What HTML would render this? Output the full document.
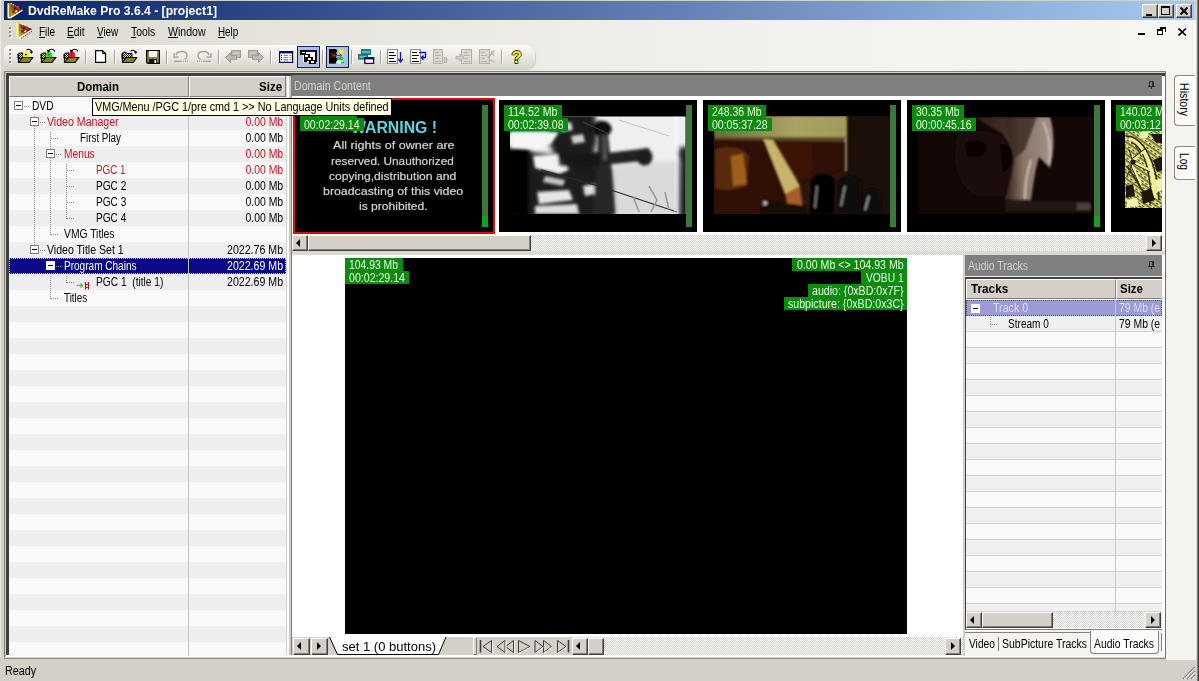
<!DOCTYPE html><html><head><meta charset="utf-8"><title>DvdReMake Pro 3.6.4 - [project1]</title><style>
*{box-sizing:border-box;margin:0;padding:0}
html,body{width:1199px;height:681px;overflow:hidden;background:#d4d0c8;font-family:"Liberation Sans",sans-serif;font-size:12px;color:#000}
.a{position:absolute}
.t{position:absolute;white-space:nowrap;line-height:16px}
#title{left:4px;top:1px;width:1190px;height:19px;background:linear-gradient(to right,#0a246a,#a6caf0)}
.cb{position:absolute;top:3px;height:14px;width:16px;background:#d4d0c8;border:1px solid;border-color:#fff #404040 #404040 #fff;box-shadow:inset -1px -1px 0 #808080}
#menubar{left:0;top:20px;width:1199px;height:52px;background:linear-gradient(to right,#dbd8cf 0,#e4e2da 20%,#eeede8 48%,#f4f3ef 75%,#f6f5f2 100%)}
#toolbar{left:4px;top:45px;width:531px;height:24px;border-radius:5px 9px 9px 0;background:linear-gradient(to bottom,#fbfaf8 0%,#ebe9e2 50%,#d6d3c9 100%);box-shadow:1px 1px 1px #cfccc3}
.sep{position:absolute;top:50px;width:2px;height:14px;border-left:1px solid #a6a399;border-right:1px solid #fff}
.grip{position:absolute;width:3px;background-image:radial-gradient(circle at 1px 1px,#8e8b82 1px,transparent 1.2px),radial-gradient(circle at 2px 2px,#fff 1px,transparent 1.2px);background-size:3px 4px}
.row{position:absolute;left:9px;width:277px;height:16px}
.row.o{background:#f9f9f9}.row.e{background:#eeeeee}
.box{position:absolute;width:9px;height:9px;border:1px solid #808080;background:#fff}
.box:after{content:"";position:absolute;left:1px;top:3px;width:5px;height:1px;background:#000}
.gl{position:absolute;background:#0e8a10;height:13px}
.hdr{position:absolute;background:#d4d0c8;border:1px solid;border-color:#fff #808080 #808080 #fff}
.dots{background-image:conic-gradient(#fff 25%,#d4d0c8 0 50%,#fff 0 75%,#d4d0c8 0);background-size:2px 2px}
.sbtn{position:absolute;width:16px;height:16px;background:#d4d0c8;border:1px solid;border-color:#fff #404040 #404040 #fff;box-shadow:inset -1px -1px 0 #808080,inset 1px 1px 0 #d4d0c8}
.arL:after,.arR:after{content:"";position:absolute;top:3px;border:4px solid transparent}
.arL:after{left:3px;border-right-color:#000;border-left-width:0}
.arR:after{left:5px;border-left-color:#000;border-right-width:0}
.vd{position:absolute;width:1px;background-image:linear-gradient(#909090 50%,transparent 50%);background-size:1px 2px}
.hd{position:absolute;height:1px;background-image:linear-gradient(to right,#909090 50%,transparent 50%);background-size:2px 1px}
</style></head><body>
<div id="title" class="a">
<div class="cb" style="left:1138px"><i class="a" style="left:3px;top:9px;width:6px;height:2px;background:#000"></i></div>
<div class="cb" style="left:1154px"><i class="a" style="left:2px;top:1px;width:9px;height:9px;border:1px solid #000;border-top-width:2px"></i></div>
<div class="cb" style="left:1172px"><svg class="a" style="left:3px;top:2px" width="8" height="8"><path d="M0.5 0.5L7.5 7.5M7.5 0.5L0.5 7.5" stroke="#000" stroke-width="2"/></svg></div>
</div>
<span class="t" style="top:2px;font-size:13px;line-height:17px;color:#fff;font-weight:bold;left:28px;transform-origin:0 50%;transform:scaleX(0.934);">DvdReMake Pro 3.6.4 - [project1]</span>
<svg class="a" style="left:6.500px;top:1.500px" width="17" height="17" viewBox="0 0 17 17"><defs><linearGradient id="ig1" x1="0" y1="1" x2="1" y2="0"><stop offset="0" stop-color="#dcc420"/><stop offset=".28" stop-color="#b87818"/><stop offset=".52" stop-color="#902c10"/><stop offset="1" stop-color="#200a08"/></linearGradient></defs><path d="M3 1L15.800 7L15 9L3.500 15.500z" fill="url(#ig1)"/><circle cx="8" cy="6.500" r="1.100" fill="#200808"/><circle cx="11.500" cy="6.800" r="1.200" fill="#c02810"/><circle cx="6.500" cy="9.500" r="1.200" fill="#7a1c0c"/><circle cx="9.300" cy="9.300" r="1" fill="#f4f0c0"/><circle cx="10.500" cy="4.800" r="1" fill="#d06818"/><path d="M3.500 1.300L8.500 3.800" fill="none" stroke="#f4f4f4" stroke-width="1.100" stroke-dasharray="1.500 1"/><path d="M15.600 8.200L3.500 15.800" fill="none" stroke="#fff" stroke-width="1.400"/><path d="M15.800 9.400L5 16.300" fill="none" stroke="#000018" stroke-width="1" stroke-dasharray="1.200 1.200"/><path d="M1.600 1V15.500" stroke="#f0e838" stroke-width="2"/><path d="M1.100 1.500V15.500" stroke="#fffff0" stroke-width="0.800"/><path d="M3.200 2V14.500" stroke="#8a9a10" stroke-width="0.800"/><path d="M0.800 15.800L4 15.500" stroke="#fff" stroke-width="1.300"/></svg>
<div id="menubar" class="a"></div>
<i class="grip" style="left:9px;top:27px;height:12px"></i>
<svg class="a" style="left:15.500px;top:22px" width="17" height="17" viewBox="0 0 17 17"><defs><linearGradient id="ig2" x1="0" y1="1" x2="1" y2="0"><stop offset="0" stop-color="#dcc420"/><stop offset=".28" stop-color="#b87818"/><stop offset=".52" stop-color="#902c10"/><stop offset="1" stop-color="#200a08"/></linearGradient></defs><path d="M3 1L15.800 7L15 9L3.500 15.500z" fill="url(#ig2)"/><circle cx="8" cy="6.500" r="1.100" fill="#200808"/><circle cx="11.500" cy="6.800" r="1.200" fill="#c02810"/><circle cx="6.500" cy="9.500" r="1.200" fill="#7a1c0c"/><circle cx="9.300" cy="9.300" r="1" fill="#f4f0c0"/><circle cx="10.500" cy="4.800" r="1" fill="#d06818"/><path d="M3.500 1.300L8.500 3.800" fill="none" stroke="#f4f4f4" stroke-width="1.100" stroke-dasharray="1.500 1"/><path d="M15.600 8.200L3.500 15.800" fill="none" stroke="#fff" stroke-width="1.400"/><path d="M15.800 9.400L5 16.300" fill="none" stroke="#111" stroke-width="1" stroke-dasharray="1.200 1.200"/><path d="M1.600 1V15.500" stroke="#f0e838" stroke-width="2"/><path d="M1.100 1.500V15.500" stroke="#fffff0" stroke-width="0.800"/><path d="M3.200 2V14.500" stroke="#8a9a10" stroke-width="0.800"/><path d="M0.800 15.800L4 15.500" stroke="#fff" stroke-width="1.300"/></svg>
<span class="t" style="top:24px;font-size:12px;line-height:16px;left:38.6px;transform-origin:0 50%;transform:scaleX(0.828);"><u>F</u>ile</span>
<span class="t" style="top:24px;font-size:12px;line-height:16px;left:66.7px;transform-origin:0 50%;transform:scaleX(0.856);"><u>E</u>dit</span>
<span class="t" style="top:24px;font-size:12px;line-height:16px;left:97px;transform-origin:0 50%;transform:scaleX(0.822);"><u>V</u>iew</span>
<span class="t" style="top:24px;font-size:12px;line-height:16px;left:131px;transform-origin:0 50%;transform:scaleX(0.867);"><u>T</u>ools</span>
<span class="t" style="top:24px;font-size:12px;line-height:16px;left:167.8px;transform-origin:0 50%;transform:scaleX(0.881);"><u>W</u>indow</span>
<span class="t" style="top:24px;font-size:12px;line-height:16px;left:217.5px;transform-origin:0 50%;transform:scaleX(0.819);"><u>H</u>elp</span>
<i class="a" style="left:1138px;top:33px;width:7px;height:2px;background:#000"></i>
<i class="a" style="left:1157px;top:29px;width:6px;height:6px;border:1px solid #000;border-top-width:2px"></i><i class="a" style="left:1160px;top:27px;width:6px;height:5px;border:1px solid #000;border-top-width:2px;border-left:0;border-bottom:0"></i>
<svg class="a" style="left:1178px;top:28px" width="9" height="8"><path d="M0.5 0.5L8 7.5M8 0.5L0.5 7.5" stroke="#000" stroke-width="1.6"/></svg>
<div id="toolbar" class="a"></div>
<i class="grip" style="left:9px;top:49px;height:16px"></i>
<div class="sep" style="left:85px"></div>
<div class="sep" style="left:114px"></div>
<div class="sep" style="left:166px"></div>
<div class="sep" style="left:218px"></div>
<div class="sep" style="left:270px"></div>
<div class="sep" style="left:322px"></div>
<div class="sep" style="left:351px"></div>
<div class="sep" style="left:380px"></div>
<div class="sep" style="left:501px"></div>
<div class="a" style="left:297px;top:46px;width:23px;height:22px;background:#b5bde0;border:1px solid #0a246a"></div>
<div class="a" style="left:326px;top:46px;width:23px;height:22px;background:#b5bde0;border:1px solid #0a246a"></div>
<svg class="a" style="left:0;top:44px" width="540" height="28" viewBox="0 44 540 28">
<defs>
<pattern id="chk" width="2" height="2" patternUnits="userSpaceOnUse"><rect width="2" height="2" fill="#111"/><rect width="1" height="1" fill="#f4f060"/><rect x="1" y="1" width="1" height="1" fill="#f4f060"/></pattern>
<g id="fold"><path d="M0 9.5V5.5L1.5 4H5V9.5z" fill="url(#chk)" stroke="#000"/><path d="M0.5 13.5L4.5 8.5H15L11 13.5z" fill="#86840c" stroke="#000" stroke-width="1.2" stroke-linejoin="round"/><path d="M0.5 5V13.5" stroke="#000" stroke-width="1.2"/></g>
</defs>
<!-- three project folders -->
<g transform="translate(18,49)"><use href="#fold"/><path d="M4.8 8.3C4.5 4 6.5 2 8 2C10 2 11.6 4.5 11 8.3z" fill="#f6f020"/><circle cx="7.8" cy="5.6" r="0.9" fill="#000"/><path d="M8.5 1.2C10.5 -0.6 13.2 0.4 13.6 3" fill="none" stroke="#000" stroke-width="1.1"/><path d="M11.6 2.4H15.4L13.6 4.8z" fill="#000"/></g>
<g transform="translate(41,49)"><use href="#fold"/><path d="M4.8 8.3C4.5 4 6.5 2 8 2C10 2 11.6 4.5 11 8.3z" fill="#20e038"/><circle cx="7.8" cy="5.6" r="0.9" fill="#063"/><path d="M7.6 1.8C9.5 -0.6 12.6 -0.2 14 2.6" fill="none" stroke="#000" stroke-width="1.1"/><path d="M5.8 0.8L9.2 1.2L7 3.8z" fill="#000"/></g>
<g transform="translate(64,49)"><use href="#fold"/><path d="M4.8 8.3C4.5 4 6.5 2 8 2C10 2 11.6 4.5 11 8.3z" fill="#ee1c1c"/><circle cx="7.8" cy="5.6" r="0.9" fill="#700"/><path d="M7.6 1.8C9.5 -0.6 12.6 -0.2 14 2.6" fill="none" stroke="#000" stroke-width="1.1"/><path d="M5.8 0.8L9.2 1.2L7 3.8z" fill="#000"/></g>
<!-- new doc -->
<path d="M95.6 50.6H102.5L105.5 53.6V62.4H95.6z" fill="#fff" stroke="#000" stroke-width="1.2"/><path d="M102.5 50.6V53.6H105.5" fill="none" stroke="#000" stroke-width="1"/>
<!-- open -->
<g transform="translate(122,49)"><path d="M0 9.5V4.5L1.5 3.2H4L5 4.4H10V9z" fill="url(#chk)" stroke="#000"/><path d="M0.5 13.5L4.5 8.5H15L11 13.5z" fill="#86840c" stroke="#000" stroke-width="1.2" stroke-linejoin="round"/><path d="M0.5 4.5V13.5" stroke="#000" stroke-width="1.2"/><path d="M8.6 2.4C10 0.6 12.6 0.8 13.6 3" fill="none" stroke="#000" stroke-width="1.1"/><path d="M11.6 2.6H15.4L13.8 5z" fill="#000"/></g>
<!-- save -->
<g transform="translate(146,50)"><path d="M0.6 0.6H13.4V13.4H1.8L0.6 12.2z" fill="#86843a" stroke="#000" stroke-width="1.2"/><rect x="3" y="1" width="8" height="6" fill="#f2f2ec"/><rect x="3" y="9" width="8" height="4.4" fill="#111"/><rect x="8.4" y="10" width="1.8" height="3" fill="#f2f2ec"/><rect x="11.6" y="1.6" width="1" height="1" fill="#f2f2ec"/></g>
<!-- undo / redo (disabled) -->
<g fill="none" stroke="#a8a49c" stroke-width="1.4"><path d="M176 55C177 50.5 186 50 187 55C187.4 57 186 58.5 184.5 59.5"/><path d="M174 53V57H178.5" /><path d="M174 61.5H182" stroke-width="1.6"/><path d="M183 61.5H188" stroke-dasharray="1 1" stroke-width="1.6"/>
<path d="M209 55C208 50.5 199 50 198 55C197.6 57 199 58.5 200.500 59.5"/><path d="M211 53V57H206.5"/><path d="M203 61.5H211" stroke-width="1.6"/><path d="M197 61.500H202" stroke-dasharray="1 1" stroke-width="1.6"/></g>
<g fill="none" stroke="#fff" stroke-width="0.7" opacity=".8"><path d="M174.8 62.8H188.500M197.800 62.800H211.800"/></g>
<!-- back / fwd (disabled) -->
<g fill="#bdb9b0" stroke="#a09c94" stroke-width="1"><rect x="231.500" y="50.500" width="9" height="7"/><path d="M225.500 57.500L230.500 52.500V55.500H236.500V59.500H230.500V62.500z"/><rect x="248.500" y="50.500" width="9" height="7"/><path d="M263.500 57.500L258.500 52.500V55.500H252.500V59.500H258.500V62.500z"/></g>
<g stroke="#d8d5cc" stroke-width="1"><path d="M233 53H239M250 53H256"/></g>
<!-- list window -->
<g><rect x="279.600" y="51.600" width="13" height="10.800" fill="#fff" stroke="#0a0a5a" stroke-width="1.2"/><rect x="279" y="51" width="14.200" height="2.400" fill="#0a0a5a"/><g stroke="#8a8a9c" stroke-width="1"><path d="M283.500 55.500H288M283.500 57.500H288M283.500 59.500H288M283.500 61H288M289.500 55.500H291.500M289.500 57.500H291.500M289.500 59.500H291.500"/></g><g fill="#22228a"><rect x="281" y="55" width="1" height="1"/><rect x="281" y="57" width="1" height="1"/><rect x="281" y="59" width="1" height="1"/></g></g>
<!-- cascade icon (pressed) -->
<g shape-rendering="crispEdges"><rect x="303" y="51" width="13" height="11" fill="#fff"/><rect x="303" y="50" width="13" height="2" fill="#0a0a5a"/><rect x="315" y="50" width="1.500" height="12" fill="#000"/><g fill="#fff" stroke="#000" stroke-width="1.500"><rect x="301" y="51" width="4.500" height="3"/><rect x="304.500" y="54.500" width="4.500" height="3"/><rect x="307.500" y="57.500" width="4.500" height="3"/><rect x="304.500" y="59" width="2" height="2"/><rect x="310" y="60.500" width="5" height="3"/></g></g>
<!-- colorful icon (pressed) -->
<g><rect x="329" y="49" width="7" height="14.600" fill="#000"/><rect x="336" y="49" width="8.400" height="14.600" fill="#8edce6"/><rect x="340" y="50" width="3" height="3.400" fill="#f0f020"/><rect x="337" y="57" width="6" height="3.400" fill="#22cc30"/><path d="M336 60.500H343V63.500H338z" fill="#fff"/><rect x="341" y="61.500" width="3" height="2" fill="#22cc30"/><path d="M336 49L337.500 51L336 53L337.500 55L336 57L337.500 59.500L336 62z" fill="#000"/><path d="M330.500 53L335.500 58M330.500 58L335.500 53" stroke="#e01820" stroke-width="1"/><path d="M334 55.500H341.500M339.500 53.800L341.800 55.500L339.500 57.200" stroke="#d01c3c" stroke-width="1" fill="none"/></g>
<!-- teal windows -->
<g><rect x="361.500" y="49.500" width="9" height="5" fill="#1a8a8a" stroke="#127878"/><rect x="362" y="51.400" width="8" height="1.200" fill="#9ad0d0"/><rect x="358.500" y="54.500" width="9" height="4.600" fill="#1a8a8a" stroke="#127878"/><rect x="359.500" y="56.300" width="7" height="1.200" fill="#9ad0d0"/><rect x="364.800" y="57.800" width="8.800" height="5.600" fill="#fff" stroke="#0a0a6a" stroke-width="1.300"/><rect x="364.200" y="57.200" width="10" height="2.200" fill="#0a0a6a"/></g>
<!-- list down -->
<g><rect x="387.500" y="49.500" width="10" height="14" fill="#fff" stroke="#8a8a8a"/><path d="M389 52.500H394M389 55.500H396M389 58.500H394M389 61.500H396" stroke="#000" stroke-width="1.200"/><path d="M400.500 52V61M398.300 59L400.500 62L402.800 59" stroke="#1010c0" stroke-width="1.300" fill="none"/></g>
<!-- list return -->
<g><rect x="410.500" y="49.500" width="10" height="14" fill="#fff" stroke="#8a8a8a"/><path d="M412 52.500H417M412 55.500H419M412 58.500H417M412 61.500H419" stroke="#000" stroke-width="1.200"/><path d="M419 52.500H425.500V57.500H421.500M423.500 55.500L421.300 57.500L423.500 59.800" stroke="#1010c0" stroke-width="1.300" fill="none"/></g>
<!-- disabled three -->
<g stroke="#b4b0a8" fill="none" stroke-width="1"><rect x="433.500" y="49.500" width="9" height="14" fill="#dcd9d1"/><path d="M435 52.500H439M435 55.500H441M435 58.500H439M435 61.500H441"/><path d="M444.500 57V63M446.500 57V63" stroke-width="1.400"/>
<rect x="461.500" y="49.500" width="10" height="14" fill="#dcd9d1"/><path d="M464 52.500H468M464 55.500H470M464 58.500H468M464 61.500H470"/><path d="M456 56.500H460V54L464 57.500L460 61V59H456z" fill="#d4d0c8"/>
<rect x="479.500" y="49.500" width="10" height="14" fill="#dcd9d1"/><path d="M481 52.500H485M481 55.500H487M481 58.500H485M481 61.500H487"/><path d="M488 58L494.500 50.500M491 51.500L494 56M490 60L494.500 62" stroke-width="1.300"/></g>
<!-- help -->
<text x="511.500" y="62.500" font-family="Liberation Sans, sans-serif" font-weight="bold" font-size="17" fill="#f4ec10" stroke="#000" stroke-width="1.300" paint-order="stroke">?</text>
</svg>

<div class="a" style="left:4px;top:71px;width:1162px;height:1px;background:#808080"></div>
<div class="a" style="left:5px;top:72px;width:1161px;height:1px;background:#d4d0c8"></div>
<div class="a" style="left:6px;top:73px;width:1159px;height:3px;background:#404040"></div>
<div class="a" style="left:4px;top:71px;width:1px;height:587px;background:#808080"></div>
<div class="a" style="left:5px;top:72px;width:1px;height:586px;background:#d4d0c8"></div>
<div class="a" style="left:6px;top:73px;width:3px;height:583px;background:#404040"></div>
<div class="a" style="left:9px;top:76px;width:278px;height:580px;background:#fff"></div>
<div class="a" style="left:286px;top:76px;width:1px;height:580px;background:#d4d0c8"></div>
<div class="a" style="left:287px;top:76px;width:2px;height:581px;background:#fff"></div>
<div class="a" style="left:289px;top:76px;width:2px;height:581px;background:#ccc9c2"></div>
<div class="a" style="left:291px;top:76px;width:1px;height:581px;background:#808080"></div>
<div class="a" style="left:6px;top:655px;width:1159px;height:2px;background:#fff"></div>
<div class="hdr" style="left:9px;top:76px;width:180px;height:21px"></div>
<div class="hdr" style="left:189px;top:76px;width:97px;height:21px"></div>
<span class="t" style="top:79px;font-size:13px;line-height:16px;font-weight:bold;left:77px;transform-origin:0 50%;transform:scaleX(0.881);">Domain</span>
<span class="t" style="top:79px;font-size:13px;line-height:16px;font-weight:bold;left:258.7px;transform-origin:0 50%;transform:scaleX(0.888);">Size</span>
<div class="row o" style="top:98px;height:16px;"></div>
<div class="row e" style="top:114px;height:16px;"></div>
<div class="row o" style="top:130px;height:16px;"></div>
<div class="row e" style="top:146px;height:16px;"></div>
<div class="row o" style="top:162px;height:16px;"></div>
<div class="row e" style="top:178px;height:16px;"></div>
<div class="row o" style="top:194px;height:16px;"></div>
<div class="row e" style="top:210px;height:16px;"></div>
<div class="row o" style="top:226px;height:16px;"></div>
<div class="row e" style="top:242px;height:16px;"></div>
<div class="row o" style="top:258px;height:16px;background:#0a0a84;outline:1px dotted #c8c8c8;outline-offset:-1px;"></div>
<div class="row e" style="top:274px;height:16px;"></div>
<div class="row o" style="top:290px;height:16px;"></div>
<div class="row e" style="top:306px;height:16px;"></div>
<div class="row o" style="top:322px;height:16px;"></div>
<div class="row e" style="top:338px;height:16px;"></div>
<div class="row o" style="top:354px;height:16px;"></div>
<div class="row e" style="top:370px;height:16px;"></div>
<div class="row o" style="top:386px;height:16px;"></div>
<div class="row e" style="top:402px;height:16px;"></div>
<div class="row o" style="top:418px;height:16px;"></div>
<div class="row e" style="top:434px;height:16px;"></div>
<div class="row o" style="top:450px;height:16px;"></div>
<div class="row e" style="top:466px;height:16px;"></div>
<div class="row o" style="top:482px;height:16px;"></div>
<div class="row e" style="top:498px;height:16px;"></div>
<div class="row o" style="top:514px;height:16px;"></div>
<div class="row e" style="top:530px;height:16px;"></div>
<div class="row o" style="top:546px;height:16px;"></div>
<div class="row e" style="top:562px;height:16px;"></div>
<div class="row o" style="top:578px;height:16px;"></div>
<div class="row e" style="top:594px;height:16px;"></div>
<div class="row o" style="top:610px;height:16px;"></div>
<div class="row e" style="top:626px;height:16px;"></div>
<div class="row o" style="top:642px;height:14px;"></div>
<i class="a" style="left:188px;top:98px;width:1px;height:558px;background:#c4c4c4"></i>
<i class="vd" style="left:34px;top:116px;height:134px"></i>
<i class="vd" style="left:50px;top:132px;height:103px"></i>
<i class="vd" style="left:66px;top:164px;height:55px"></i>
<i class="vd" style="left:50px;top:276px;height:23px"></i>
<i class="vd" style="left:66px;top:276px;height:7px"></i>
<i class="hd" style="left:24px;top:106px;width:5px"></i>
<i class="hd" style="left:40px;top:122px;width:5px"></i>
<i class="hd" style="left:56px;top:154px;width:5px"></i>
<i class="hd" style="left:40px;top:250px;width:5px"></i>
<i class="hd" style="left:56px;top:266px;width:5px"></i>
<i class="hd" style="left:51px;top:138px;width:8px"></i>
<i class="hd" style="left:51px;top:234px;width:8px"></i>
<i class="hd" style="left:51px;top:298px;width:8px"></i>
<i class="hd" style="left:67px;top:170px;width:8px"></i>
<i class="hd" style="left:67px;top:186px;width:8px"></i>
<i class="hd" style="left:67px;top:202px;width:8px"></i>
<i class="hd" style="left:67px;top:218px;width:8px"></i>
<i class="hd" style="left:67px;top:282px;width:8px"></i>
<i class="box" style="left:14px;top:101px"></i>
<span class="t" style="top:98px;font-size:12.5px;line-height:16px;color:#000;left:31.5px;transform-origin:0 50%;transform:scaleX(0.815);">DVD</span>
<i class="box" style="left:30px;top:117px"></i>
<span class="t" style="top:114px;font-size:12.5px;line-height:16px;color:#c41824;left:47px;transform-origin:0 50%;transform:scaleX(0.847);">Video Manager</span>
<span class="t" style="top:114px;font-size:12.5px;line-height:16px;color:#c41824;right:916px;transform-origin:100% 50%;transform:scaleX(0.835);">0.00 Mb</span>
<span class="t" style="top:130px;font-size:12.5px;line-height:16px;color:#000;left:79.5px;transform-origin:0 50%;transform:scaleX(0.787);">First Play</span>
<span class="t" style="top:130px;font-size:12.5px;line-height:16px;color:#000;right:916px;transform-origin:100% 50%;transform:scaleX(0.835);">0.00 Mb</span>
<i class="box" style="left:46px;top:149px"></i>
<span class="t" style="top:146px;font-size:12.5px;line-height:16px;color:#c41824;left:63.6px;transform-origin:0 50%;transform:scaleX(0.818);">Menus</span>
<span class="t" style="top:146px;font-size:12.5px;line-height:16px;color:#c41824;right:916px;transform-origin:100% 50%;transform:scaleX(0.835);">0.00 Mb</span>
<span class="t" style="top:162px;font-size:12.5px;line-height:16px;color:#c41824;left:95.5px;transform-origin:0 50%;transform:scaleX(0.786);">PGC 1</span>
<span class="t" style="top:162px;font-size:12.5px;line-height:16px;color:#c41824;right:916px;transform-origin:100% 50%;transform:scaleX(0.835);">0.00 Mb</span>
<span class="t" style="top:178px;font-size:12.5px;line-height:16px;color:#000;left:95.5px;transform-origin:0 50%;transform:scaleX(0.808);">PGC 2</span>
<span class="t" style="top:178px;font-size:12.5px;line-height:16px;color:#000;right:916px;transform-origin:100% 50%;transform:scaleX(0.835);">0.00 Mb</span>
<span class="t" style="top:194px;font-size:12.5px;line-height:16px;color:#000;left:95.5px;transform-origin:0 50%;transform:scaleX(0.808);">PGC 3</span>
<span class="t" style="top:194px;font-size:12.5px;line-height:16px;color:#000;right:916px;transform-origin:100% 50%;transform:scaleX(0.835);">0.00 Mb</span>
<span class="t" style="top:210px;font-size:12.5px;line-height:16px;color:#000;left:95.5px;transform-origin:0 50%;transform:scaleX(0.808);">PGC 4</span>
<span class="t" style="top:210px;font-size:12.5px;line-height:16px;color:#000;right:916px;transform-origin:100% 50%;transform:scaleX(0.835);">0.00 Mb</span>
<span class="t" style="top:226px;font-size:12.5px;line-height:16px;color:#000;left:63.8px;transform-origin:0 50%;transform:scaleX(0.825);">VMG Titles</span>
<i class="box" style="left:30px;top:245px"></i>
<span class="t" style="top:242px;font-size:12.5px;line-height:16px;color:#000;left:47.3px;transform-origin:0 50%;transform:scaleX(0.844);">Video Title Set 1</span>
<span class="t" style="top:242px;font-size:12.5px;line-height:16px;color:#000;right:916px;transform-origin:100% 50%;transform:scaleX(0.848);">2022.76 Mb</span>
<i class="box" style="left:46px;top:261px;border-color:#fff;background:#fff"></i>
<span class="t" style="top:258px;font-size:12.5px;line-height:16px;color:#fff;left:63.8px;transform-origin:0 50%;transform:scaleX(0.803);">Program Chains</span>
<span class="t" style="top:258px;font-size:12.5px;line-height:16px;color:#fff;right:916px;transform-origin:100% 50%;transform:scaleX(0.848);">2022.69 Mb</span>
<span class="t" style="top:274px;font-size:12.5px;line-height:16px;color:#000;left:95.6px;transform-origin:0 50%;transform:scaleX(0.815);">PGC 1&nbsp; (title 1)</span>
<span class="t" style="top:274px;font-size:12.5px;line-height:16px;color:#000;right:916px;transform-origin:100% 50%;transform:scaleX(0.848);">2022.69 Mb</span>
<span class="t" style="top:290px;font-size:12.5px;line-height:16px;color:#000;left:63.8px;transform-origin:0 50%;transform:scaleX(0.789);">Titles</span>
<svg class="a" style="left:76px;top:281px" width="15" height="10" viewBox="76 281 15 10"><path d="M77 285.500H82M80.500 283.500L82.500 285.500L80.500 287.500" stroke="#28c828" stroke-width="1.200" fill="none"/><path d="M85.500 282V289.500M88.500 282V289.500" stroke="#a01818" stroke-width="1.200"/><path d="M85.500 284.500H88.500M85.500 287.500H88.500" stroke="#c82828" stroke-width="1"/></svg>

<div class="a" style="left:92px;top:98px;width:300px;height:18px;background:#ffffe1;border:1px solid #000;z-index:5"></div>
<span class="t" style="top:98.5px;font-size:12.5px;line-height:16px;left:95.3px;transform-origin:0 50%;transform:scaleX(0.864);z-index:6;">VMG/Menu /PGC 1/pre cmd 1 &gt;&gt; No Language Units defined</span>
<div class="a" style="left:292px;top:75px;width:870px;height:21px;background:#808080"></div>
<span class="t" style="top:78px;font-size:12px;line-height:16px;color:#d4d0c8;left:293.8px;transform-origin:0 50%;transform:scaleX(0.885);">Domain Content</span>
<svg class="a" style="left:1148px;top:81px" width="7" height="8"><path d="M1.5 0.5H5.5M1.5 0.500V5.500M4.500 0.500V5.500M5.500 0.500V5.500M0 5.500H7M3.500 5.500V8" stroke="#2c2c2c" fill="none"/></svg>
<div class="a" style="left:292px;top:96px;width:870px;height:159px;background:#fff"></div>
<div class="a" style="left:1162px;top:76px;width:3px;height:581px;background:#fff"></div>
<div class="a" style="left:1165px;top:72px;width:1px;height:586px;background:#707070;z-index:3"></div>
<div class="a" style="left:293px;top:98px;width:202px;height:136px;background:#000;overflow:hidden;border:2px solid #e00c0c;">
<!--TH0-->
<span class="t" style="top:19px;font-size:16px;line-height:18px;color:#5fd4dc;font-weight:bold;left:56px;transform-origin:0 50%;transform:scaleX(0.987);filter:blur(.4px);">WARNING !</span>
<span class="t" style="top:37.4px;font-size:11.5px;line-height:16px;color:#cfcfcf;left:37.5px;transform-origin:0 50%;transform:scaleX(1.093);filter:blur(.35px);text-shadow:0 0 1px #999;">All rights of owner are</span>
<span class="t" style="top:53px;font-size:11.5px;line-height:16px;color:#cfcfcf;left:36.30000000000001px;transform-origin:0 50%;transform:scaleX(1.027);filter:blur(.35px);text-shadow:0 0 1px #999;">reserved. Unauthorized</span>
<span class="t" style="top:68.2px;font-size:11.5px;line-height:16px;color:#cfcfcf;left:34.39999999999998px;transform-origin:0 50%;transform:scaleX(1.052);filter:blur(.35px);text-shadow:0 0 1px #999;">copying,distribution and</span>
<span class="t" style="top:83.2px;font-size:11.5px;line-height:16px;color:#cfcfcf;left:28px;transform-origin:0 50%;transform:scaleX(1.075);filter:blur(.35px);text-shadow:0 0 1px #999;">broadcasting of this video</span>
<span class="t" style="top:97.6px;font-size:11.5px;line-height:16px;color:#cfcfcf;left:64px;transform-origin:0 50%;transform:scaleX(1.052);filter:blur(.35px);text-shadow:0 0 1px #999;">is prohibited.</span>
<i class="gl" style="left:5px;top:5px;width:57px"></i><i class="gl" style="left:5px;top:17.5px;width:63.5px"></i>
<span class="t" style="top:5px;font-size:12.5px;line-height:14px;color:#e4ffe0;left:8.5px;transform-origin:0 50%;transform:scaleX(0.830);">104.93 Mb</span>
<span class="t" style="top:18px;font-size:12.5px;line-height:14px;color:#e4ffe0;left:8.5px;transform-origin:0 50%;transform:scaleX(0.841);">00:02:29.14</span>
<i class="a" style="left:187px;top:5px;width:6px;height:122px;background:linear-gradient(#3a783c 0,#3a783c 91%,#18a01c 91%)"></i>
</div>
<div class="a" style="left:497px;top:98px;width:202px;height:136px;background:#000;overflow:hidden;border:2px solid #fff;">
<svg class="a" style="left:0;top:0" width="198" height="132" viewBox="0 0 198 132"><defs><filter id="b1" x="-10%" y="-10%" width="120%" height="120%"><feGaussianBlur stdDeviation="1.400"/></filter><filter id="b1b" x="-10%" y="-10%" width="120%" height="120%"><feGaussianBlur stdDeviation="2.600"/></filter><filter id="b1c" x="-10%" y="-10%" width="120%" height="120%"><feGaussianBlur stdDeviation="0.600"/></filter><clipPath id="c1"><rect x="11" y="16.500" width="175.500" height="97.500"/></clipPath></defs>
<g clip-path="url(#c1)"><rect x="11" y="16" width="176" height="98" fill="#efefef"/>
<g filter="url(#b1b)"><path d="M100 66L187 60V116H100z" fill="#dadada"/><path d="M5 12H62L60 30L40 32H5z" fill="#050505"/><path d="M5 48L30 46L36 60L34 118H5z" fill="#030303"/><path d="M54 12L96 12L98 40L92 64L60 62L48 40z" fill="#1c1c1c"/><path d="M30 52L76 58L112 70L116 118H30z" fill="#1a1a1a"/><path d="M180 48L190 46V118H179z" fill="#1a1a1a"/></g>
<g filter="url(#b1)"><path d="M12 32L60 32L52 44L34 50L12 48z" fill="#f6f6f6"/><path d="M34 56L58 54L70 70L60 74L36 68z" fill="#f2f2f2"/><path d="M38 92L70 90L74 100L40 104z" fill="#e6e6e6"/><path d="M36 106L78 104L80 114L36 114z" fill="#dedede"/><path d="M60 24L72 22L74 30L62 32z" fill="#d8d8d8"/><path d="M72 36L84 34L86 42L74 44z" fill="#cfcfcf"/><path d="M84 86L95 84L96 94L86 96z" fill="#e0e0e0"/><path d="M46 76L66 80L64 86L44 82z" fill="#c8c8c8"/>
<ellipse cx="102.700" cy="29" rx="10" ry="8.300" fill="#0a0a0a"/><path d="M99 34L109 34L112 62L116 114L94 114L98 62z" fill="#262626"/><path d="M75 57L150 48L153 60L76 68z" fill="#222"/><ellipse cx="145.500" cy="57" rx="8" ry="8.600" fill="#1c1c1c"/><path d="M58 50L100 52L100 70L60 66z" fill="#181818" opacity=".85"/>
<path d="M104 36L107 36L108 60L104 60z" fill="#555"/></g>
<g filter="url(#b1c)" fill="none"><path d="M42 70L100 86L178 112" stroke="#2a2a2a" stroke-width="1.300"/><path d="M84 22L110 34" stroke="#444" stroke-width="1"/><path d="M120 20L170 36" stroke="#c4c4c4" stroke-width="1"/><path d="M150 86L158 100L152 112M166 92L170 110M134 96L140 112" stroke="#9a9a9a" stroke-width="1.600"/></g>
<rect x="175" y="16" width="4.500" height="98" fill="#fff" opacity=".35"/></g></svg>

<i class="gl" style="left:5px;top:5px;width:57.5px"></i><i class="gl" style="left:5px;top:17.5px;width:63.5px"></i>
<span class="t" style="top:5px;font-size:12.5px;line-height:14px;color:#e4ffe0;left:8.5px;transform-origin:0 50%;transform:scaleX(0.851);">114.52 Mb</span>
<span class="t" style="top:18px;font-size:12.5px;line-height:14px;color:#e4ffe0;left:8.5px;transform-origin:0 50%;transform:scaleX(0.841);">00:02:39.08</span>
<i class="a" style="left:187px;top:5px;width:6px;height:122px;background:linear-gradient(#3a783c 0,#3a783c 100%,#18a01c 100%)"></i>
</div>
<div class="a" style="left:701px;top:98px;width:202px;height:136px;background:#000;overflow:hidden;border:2px solid #fff;">
<svg class="a" style="left:0;top:0" width="198" height="132" viewBox="0 0 198 132"><defs><filter id="b2" x="-10%" y="-10%" width="120%" height="120%"><feGaussianBlur stdDeviation="1.300"/></filter><clipPath id="c2"><rect x="11" y="16" width="176" height="98"/></clipPath><linearGradient id="g2" x1="0" x2="1"><stop offset="0" stop-color="#6e6a3c"/><stop offset=".6" stop-color="#aaa464"/><stop offset="1" stop-color="#a09a5c"/></linearGradient></defs>
<g clip-path="url(#c2)"><rect x="11" y="16" width="176" height="98" fill="#2e1006"/><rect x="144" y="16" width="44" height="98" fill="#1c0e08"/>
<g filter="url(#b2)"><rect x="11" y="16" width="133" height="21" fill="url(#g2)"/><path d="M11 37H144L144 42L11 40z" fill="#5a4a20"/><path d="M12 50C20 44 40 46 46 56L44 86C36 90 20 92 12 88z" fill="#5a2a0c"/><path d="M28 56L40 54L44 84L30 86z" fill="#a0601c"/><path d="M82 93L97 86L100 112L86 112z" fill="#a85c2c"/><path d="M60 40L110 44L108 78L80 80z" fill="#4a1a0a" opacity=".5"/><path d="M60 39L70 40L97 86L82 94z" fill="#c8b468"/><path d="M143 38V80" stroke="#c8c0a0" stroke-width="1.400"/><path d="M100 84L144 70V114H100z" fill="#2a140a"/>
<path d="M108 80C112 72 128 72 132 80V114H106z" fill="#060606"/><path d="M134 82C138 74 154 74 158 82V114H134z" fill="#080808"/><path d="M160 94C164 87 174 87 178 94V114H160z" fill="#0a0a0a"/><path d="M60 100L104 106V114H58z" fill="#120a06"/>
<path d="M114 86L112 108" stroke="#7a7a70" stroke-width="2"/><path d="M142 86L138 106" stroke="#8a8a80" stroke-width="2"/><path d="M166 96L162 110" stroke="#9a9a90" stroke-width="2"/><circle cx="62" cy="103" r="2.500" fill="#aaa"/></g></g></svg>

<i class="gl" style="left:5px;top:5px;width:57.5px"></i><i class="gl" style="left:5px;top:17.5px;width:63.5px"></i>
<span class="t" style="top:5px;font-size:12.5px;line-height:14px;color:#e4ffe0;left:8.5px;transform-origin:0 50%;transform:scaleX(0.838);">248.36 Mb</span>
<span class="t" style="top:18px;font-size:12.5px;line-height:14px;color:#e4ffe0;left:8.5px;transform-origin:0 50%;transform:scaleX(0.841);">00:05:37.28</span>
<i class="a" style="left:187px;top:5px;width:6px;height:122px;background:linear-gradient(#3a783c 0,#3a783c 98.5%,#18a01c 98.5%)"></i>
</div>
<div class="a" style="left:905px;top:98px;width:202px;height:136px;background:#000;overflow:hidden;border:2px solid #fff;">
<svg class="a" style="left:0;top:0" width="198" height="132" viewBox="0 0 198 132"><defs><filter id="b3" x="-10%" y="-10%" width="120%" height="120%"><feGaussianBlur stdDeviation="1.200"/></filter><clipPath id="c3"><rect x="11" y="17" width="176" height="97"/></clipPath><linearGradient id="g3" x1="0" x2="1"><stop offset="0" stop-color="#2a1a14"/><stop offset=".45" stop-color="#46322a"/><stop offset=".62" stop-color="#8a7668"/><stop offset="1" stop-color="#a4928a"/></linearGradient></defs>
<g clip-path="url(#c3)"><rect x="11" y="17" width="176" height="97" fill="#120705"/>
<g filter="url(#b3)"><path d="M67 17H143C147 30 148 50 143 68L132 57C128 70 126 85 124 100H98C102 86 106 72 107 57C104 48 98 38 96 34z" fill="url(#g3)"/><path d="M96 17H130L118 50L108 58z" fill="#3a2a22" opacity=".8"/><path d="M50 36C60 28 90 30 100 40C108 50 108 66 104 76L100 96H70C56 90 46 70 48 50z" fill="#1c0e0a"/><path d="M58 44C64 38 76 38 80 46C80 56 70 60 60 56z" fill="#0c0504"/><path d="M92 44C98 42 106 46 106 56C104 66 100 72 96 72z" fill="#0e0605"/><path d="M98 101H183V112H98z" fill="#241812"/><path d="M170 103H184V110H170z" fill="#4a4038"/><path d="M124 60C120 72 118 86 118 99" stroke="#d8ccbc" stroke-width="1.600" fill="none"/><path d="M136 22C142 34 144 50 142 64" stroke="#d8ccbc" stroke-width="1.400" fill="none"/></g></g></svg>

<i class="gl" style="left:5px;top:5px;width:51.5px"></i><i class="gl" style="left:5px;top:17.5px;width:63.5px"></i>
<span class="t" style="top:5px;font-size:12.5px;line-height:14px;color:#e4ffe0;left:8.5px;transform-origin:0 50%;transform:scaleX(0.835);">30.35 Mb</span>
<span class="t" style="top:18px;font-size:12.5px;line-height:14px;color:#e4ffe0;left:8.5px;transform-origin:0 50%;transform:scaleX(0.841);">00:00:45.16</span>
<i class="a" style="left:187px;top:5px;width:6px;height:122px;background:linear-gradient(#3a783c 0,#3a783c 91%,#18a01c 91%)"></i>
</div>
<div class="a" style="left:1109px;top:98px;width:53px;height:136px;background:#000;overflow:hidden;border:2px solid #fff;border-right:0;">
<svg class="a" style="left:0;top:0" width="52" height="132" viewBox="0 0 52 132"><defs><filter id="b4"><feGaussianBlur stdDeviation="0.450"/></filter><pattern id="h4" width="5" height="5" patternUnits="userSpaceOnUse" patternTransform="rotate(35)"><rect width="5" height="5" fill="#e6e68a"/><rect width="5" height="1.600" fill="#6a6428"/><rect x="1" y="3" width="2.500" height="1.200" fill="#3a3410"/></pattern></defs><rect x="14" y="30" width="40" height="78" fill="url(#h4)"/><g filter="url(#b4)"><path d="M18 38C30 40 42 60 44 98" fill="none" stroke="#f0f09a" stroke-width="4"/><path d="M15 36C30 36 46 58 48 100" fill="none" stroke="#2a2408" stroke-width="1.400"/><path d="M20 42C30 46 38 62 40 96" fill="none" stroke="#2a2408" stroke-width="1.200"/><g stroke="#f2f2a0" stroke-width="2.600"><path d="M22 60L34 50M22 62L38 70M20 64L30 84"/></g><g stroke="#2a2408" stroke-width="1" fill="none"><path d="M22 58L35 48M23 64L39 72M19 64L29 86M18 50L22 62L16 76M24 44L30 56"/></g><path d="M16 66L40 104" stroke="#3a3010" stroke-width="1.800"/><g fill="#1c1804"><circle cx="22" cy="62" r="2.600"/><path d="M40 34L52 34L52 44L44 42z"/><path d="M42 60L52 56V70L46 72z"/><path d="M30 92L40 88L44 100L32 104z"/><path d="M15 86L22 84L24 96L15 98z"/></g><g fill="#f4f4a8"><path d="M16 100L26 98L28 106L16 107z"/><path d="M44 80L52 78V90L46 92z"/><path d="M28 32L38 31L36 38L30 39z"/></g></g></svg>

<i class="gl" style="left:5px;top:5px;width:57.5px"></i><i class="gl" style="left:5px;top:17.5px;width:63.5px"></i>
<span class="t" style="top:5px;font-size:12.5px;line-height:14px;color:#e4ffe0;left:8.5px;transform-origin:0 50%;transform:scaleX(0.838);">140.02 Mb</span>
<span class="t" style="top:18px;font-size:12.5px;line-height:14px;color:#e4ffe0;left:8.5px;transform-origin:0 50%;transform:scaleX(0.841);">00:03:12.00</span>
</div>
<div class="a" style="left:1162px;top:97px;width:3px;height:140px;background:#fff"></div>
<div class="a" style="left:1166px;top:72px;width:33px;height:586px;background:#f4f3ee"></div>
<div class="a dots" style="left:292px;top:235px;width:870px;height:16px"></div>
<div class="sbtn arL" style="left:292px;top:235px"></div>
<div class="sbtn" style="left:308px;top:235px;width:223px"></div>
<div class="sbtn arR" style="left:1146px;top:235px"></div>
<div class="a" style="left:292px;top:251px;width:873px;height:4px;background:#dcd9d3"></div>
<div class="a" style="left:292px;top:255px;width:671px;height:401px;background:#fff"></div>
<div class="a" style="left:345px;top:258px;width:562px;height:376px;background:#000"></div>
<i class="gl" style="left:345px;top:258px;width:58px"></i><i class="gl" style="left:345px;top:271px;width:64px"></i>
<span class="t" style="top:258px;font-size:12.5px;line-height:14px;color:#e4ffe0;left:349px;transform-origin:0 50%;transform:scaleX(0.830);">104.93 Mb</span>
<span class="t" style="top:271px;font-size:12.5px;line-height:14px;color:#e4ffe0;left:348.5px;transform-origin:0 50%;transform:scaleX(0.848);">00:02:29.14</span>
<i class="gl" style="left:792.2px;top:258.0px;width:114.79999999999995px"></i>
<span class="t" style="top:258.0px;font-size:12.5px;line-height:14px;color:#e4ffe0;left:796.7px;transform-origin:0 50%;transform:scaleX(0.848);">0.00 Mb &lt;&gt; 104.93 Mb</span>
<i class="gl" style="left:861px;top:270.9px;width:46px"></i>
<span class="t" style="top:270.9px;font-size:12.5px;line-height:14px;color:#e4ffe0;left:865.6px;transform-origin:0 50%;transform:scaleX(0.822);">VOBU 1</span>
<i class="gl" style="left:807.6px;top:283.7px;width:99.39999999999998px"></i>
<span class="t" style="top:283.7px;font-size:12.5px;line-height:14px;color:#e4ffe0;left:811.9px;transform-origin:0 50%;transform:scaleX(0.849);">audio: {0xBD:0x7F}</span>
<i class="gl" style="left:784px;top:296.6px;width:123px"></i>
<span class="t" style="top:296.6px;font-size:12.5px;line-height:14px;color:#e4ffe0;left:787.7px;transform-origin:0 50%;transform:scaleX(0.849);">subpicture: {0xBD:0x3C}</span>
<div class="a dots" style="left:292px;top:637px;width:671px;height:18px"></div>
<div class="a" style="left:292px;top:637px;width:181px;height:18px;background:#d4d0c8"></div>
<div class="a" style="left:473px;top:637px;width:100px;height:18px;background:#d4d0c8"></div>
<div class="a" style="left:473px;top:637px;width:4px;height:18px;background:#d4d0c8;border:1px solid;border-color:#fff #808080 #808080 #fff"></div>
<div class="sbtn arL" style="left:293px;top:638px;width:17px;height:17px"></div><div class="sbtn arR" style="left:311px;top:638px;width:17px;height:17px"></div>
<svg class="a" style="left:328px;top:637px" width="120" height="19"><path d="M1.5 0L9.5 17.5H110.5L118 0" fill="#fff" stroke="#000" stroke-width="1"/></svg>
<span class="t" style="top:638px;font-size:13px;line-height:17px;left:342px;transform-origin:0 50%;transform:scaleX(1.001);">set 1 (0 buttons)</span>
<svg class="a" style="left:478px;top:638px" width="94" height="17" viewBox="478 638 94 17"><g fill="#d4d0c8" stroke="#3c3c3c" stroke-width="1" stroke-linejoin="miter"><path d="M480.500 640V652.500" stroke-width="1.600"/><path d="M491.500 640.500V652.500L483 646.500z"/><path d="M505 640.500V652.500L497 646.500z"/><path d="M513.500 640.500V652.500L505.500 646.500z"/><path d="M518.500 640.500V652.500L530 646.500z"/><path d="M535 640.500V652.500L543 646.500z"/><path d="M543.500 640.500V652.500L551.500 646.500z"/><path d="M557.500 640.500V652.500L566 646.500z"/><path d="M568.500 640V652.500" stroke-width="1.600"/></g><g stroke="#fff" stroke-width="1" fill="none"><path d="M492.500 641V653M506 641V653M514.500 641V653M519 653.200L530.500 647.200M535.500 653.200L543.500 647.200M544 653.200L552 647.200M558 653.200L566.500 647.200"/></g></svg>

<div class="sbtn arL" style="left:572px;top:638px;height:17px"></div><div class="sbtn" style="left:588px;top:638px;width:16px;height:17px"></div>
<div class="sbtn arR" style="left:945px;top:638px;height:17px"></div>
<div class="a" style="left:963px;top:255px;width:2px;height:401px;background:#d4d0c8"></div>
<div class="a" style="left:965px;top:255px;width:197px;height:21px;background:#808080"></div>
<span class="t" style="top:258px;font-size:12px;line-height:16px;color:#d4d0c8;left:967.5px;transform-origin:0 50%;transform:scaleX(0.865);">Audio Tracks</span>
<svg class="a" style="left:1148px;top:261px" width="7" height="8"><path d="M1.5 0.5H5.5M1.5 0.500V5.500M4.500 0.500V5.500M5.500 0.500V5.500M0 5.500H7M3.500 5.500V8" stroke="#2c2c2c" fill="none"/></svg>
<div class="a" style="left:965px;top:276px;width:197px;height:357px;background:#f4f3ee"></div>
<div class="a" style="left:965px;top:277px;width:197px;height:353px;border:1px solid #808080;border-right:0;border-top:2px solid #404040;border-left:1px solid #404040;background:#fff"></div>
<div class="hdr" style="left:966px;top:279px;width:150px;height:20px"></div>
<div class="hdr" style="left:1116px;top:279px;width:46px;height:20px;border-right:0"></div>
<span class="t" style="top:280.5px;font-size:13px;line-height:16px;font-weight:bold;left:970.6px;transform-origin:0 50%;transform:scaleX(0.903);">Tracks</span>
<span class="t" style="top:280.5px;font-size:13px;line-height:16px;font-weight:bold;left:1119.6px;transform-origin:0 50%;transform:scaleX(0.880);">Size</span>
<div class="a" style="left:966px;top:300px;width:196px;height:16px;background:#f9f9f9;border-bottom:1px solid #d2d2d2"></div>
<div class="a" style="left:966px;top:316px;width:196px;height:16px;background:#efefef;border-bottom:1px solid #d2d2d2"></div>
<div class="a" style="left:966px;top:332px;width:196px;height:16px;background:#f9f9f9;border-bottom:1px solid #d2d2d2"></div>
<div class="a" style="left:966px;top:348px;width:196px;height:16px;background:#efefef;border-bottom:1px solid #d2d2d2"></div>
<div class="a" style="left:966px;top:364px;width:196px;height:16px;background:#f9f9f9;border-bottom:1px solid #d2d2d2"></div>
<div class="a" style="left:966px;top:380px;width:196px;height:16px;background:#efefef;border-bottom:1px solid #d2d2d2"></div>
<div class="a" style="left:966px;top:396px;width:196px;height:16px;background:#f9f9f9;border-bottom:1px solid #d2d2d2"></div>
<div class="a" style="left:966px;top:412px;width:196px;height:16px;background:#efefef;border-bottom:1px solid #d2d2d2"></div>
<div class="a" style="left:966px;top:428px;width:196px;height:16px;background:#f9f9f9;border-bottom:1px solid #d2d2d2"></div>
<div class="a" style="left:966px;top:444px;width:196px;height:16px;background:#efefef;border-bottom:1px solid #d2d2d2"></div>
<div class="a" style="left:966px;top:460px;width:196px;height:16px;background:#f9f9f9;border-bottom:1px solid #d2d2d2"></div>
<div class="a" style="left:966px;top:476px;width:196px;height:16px;background:#efefef;border-bottom:1px solid #d2d2d2"></div>
<div class="a" style="left:966px;top:492px;width:196px;height:16px;background:#f9f9f9;border-bottom:1px solid #d2d2d2"></div>
<div class="a" style="left:966px;top:508px;width:196px;height:16px;background:#efefef;border-bottom:1px solid #d2d2d2"></div>
<div class="a" style="left:966px;top:524px;width:196px;height:16px;background:#f9f9f9;border-bottom:1px solid #d2d2d2"></div>
<div class="a" style="left:966px;top:540px;width:196px;height:16px;background:#efefef;border-bottom:1px solid #d2d2d2"></div>
<div class="a" style="left:966px;top:556px;width:196px;height:16px;background:#f9f9f9;border-bottom:1px solid #d2d2d2"></div>
<div class="a" style="left:966px;top:572px;width:196px;height:16px;background:#efefef;border-bottom:1px solid #d2d2d2"></div>
<div class="a" style="left:966px;top:588px;width:196px;height:16px;background:#f9f9f9;border-bottom:1px solid #d2d2d2"></div>
<div class="a" style="left:966px;top:604px;width:196px;height:8px;background:#efefef;border-bottom:1px solid #d2d2d2"></div>
<div class="a" style="left:966px;top:300px;width:196px;height:16px;background:#9c9cd4;outline:1px dotted #555;outline-offset:-1px"></div>
<i class="a" style="left:1115px;top:300px;width:1px;height:312px;background:#c8c8c8"></i>
<i class="box" style="left:971px;top:303.500px;border-color:#fff"></i>
<i class="hd" style="left:981px;top:308px;width:4px"></i>
<i class="vd" style="left:990px;top:317px;height:8px"></i>
<i class="hd" style="left:990px;top:324px;width:8px"></i>
<span class="t" style="top:300px;font-size:12.5px;line-height:16px;color:#dcdcf4;left:992.6px;transform-origin:0 50%;transform:scaleX(0.854);">Track 0</span>
<span class="t" style="top:300px;font-size:12.5px;line-height:16px;color:#dcdcf4;left:1118.9px;transform-origin:0 50%;transform:scaleX(0.833);">79 Mb (e</span>
<span class="t" style="top:316px;font-size:12.5px;line-height:16px;left:1007.7px;transform-origin:0 50%;transform:scaleX(0.807);">Stream 0</span>
<span class="t" style="top:316px;font-size:12.5px;line-height:16px;left:1118.9px;transform-origin:0 50%;transform:scaleX(0.833);">79 Mb (e</span>
<div class="a dots" style="left:966px;top:612px;width:196px;height:16px"></div>
<div class="sbtn arL" style="left:966px;top:612px"></div><div class="sbtn" style="left:982px;top:612px;width:71px"></div><div class="sbtn arR" style="left:1145px;top:612px"></div>
<div class="a" style="left:965px;top:630px;width:197px;height:26px;background:#f4f3ee"></div>
<div class="a" style="left:965px;top:632px;width:125px;height:1px;background:#808080"></div>
<div class="a" style="left:1090px;top:631px;width:69px;height:23px;background:#fcfcfa;border:1px solid #808080;border-top:0;border-radius:0 0 4px 4px"></div>
<div class="a" style="left:1161px;top:633px;width:2px;height:18px;border-left:1px solid #808080"></div>
<span class="t" style="top:636px;font-size:12px;line-height:16px;left:968.5px;transform-origin:0 50%;transform:scaleX(0.850);">Video</span>
<i class="a" style="left:998px;top:637px;width:1px;height:14px;background:#808080"></i>
<span class="t" style="top:636px;font-size:12px;line-height:16px;left:1001.5px;transform-origin:0 50%;transform:scaleX(0.873);">SubPicture Tracks</span>
<span class="t" style="top:636px;font-size:12px;line-height:16px;left:1094px;transform-origin:0 50%;transform:scaleX(0.865);">Audio Tracks</span>
<div class="a" style="left:1174px;top:75px;width:21px;height:51px;background:#fbfbf8;border:1px solid #8a8a84;border-right:0;border-radius:4px 0 0 4px"></div>
<span class="t" style="left:1192px;top:82.8px;transform-origin:0 0;transform:rotate(90deg) scaleX(0.889);font-size:12px">History</span>
<div class="a" style="left:1174px;top:146px;width:21px;height:34px;background:#fbfbf8;border:1px solid #8a8a84;border-right:0;border-radius:4px 0 0 4px"></div>
<span class="t" style="left:1192px;top:153px;transform-origin:0 0;transform:rotate(90deg) scaleX(0.849);font-size:12px">Log</span>
<div class="a" style="left:1195px;top:20px;width:1px;height:640px;background:#fff"></div>
<div class="a" style="left:1196px;top:0;width:1px;height:681px;background:#d4d0c8"></div>
<div class="a" style="left:1197px;top:0;width:1px;height:681px;background:#808080"></div>
<div class="a" style="left:1198px;top:0;width:1px;height:681px;background:#404040"></div>
<div class="a" style="left:0;top:0;width:1px;height:681px;background:#eceae5"></div>
<div class="a" style="left:0;top:657px;width:1166px;height:24px;background:#d4d0c8"></div>
<div class="a" style="left:1166px;top:657px;width:29px;height:3px;background:#f4f3ee"></div>
<div class="a" style="left:0;top:660px;width:1196px;height:21px;background:#d4d0c8"></div>
<div class="a" style="left:4px;top:657px;width:1162px;height:1px;background:#d4d0c8"></div>
<div class="a" style="left:4px;top:658px;width:1162px;height:1px;background:#8a8680"></div>
<span class="t" style="top:662.5px;font-size:12px;line-height:16px;left:5px;transform-origin:0 50%;transform:scaleX(0.894);">Ready</span>
<svg class="a" style="left:1182px;top:666px" width="14" height="14"><path d="M13 1L1 13M13 5L5 13M13 9L9 13" stroke="#808080" stroke-width="1.4"/><path d="M13 2L2 13M13 6L6 13M13 10L10 13" stroke="#fff" stroke-width="1"/></svg>
</body></html>
